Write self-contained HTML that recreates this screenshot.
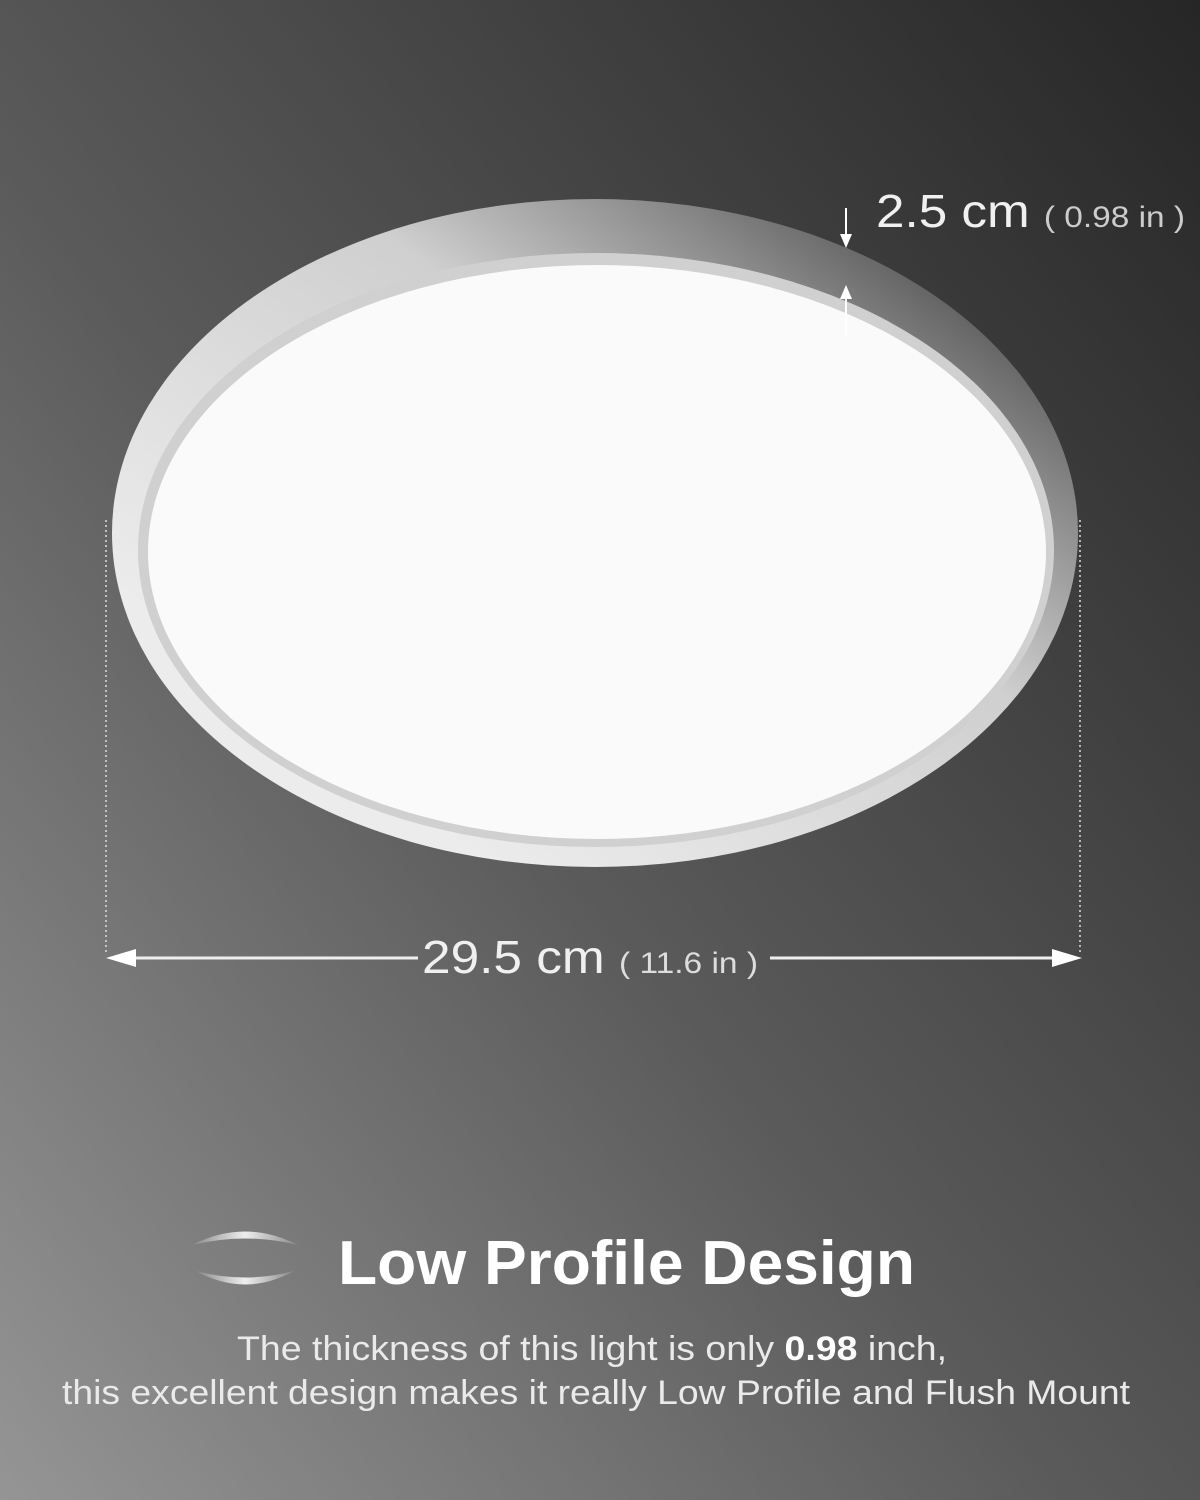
<!DOCTYPE html>
<html><head><meta charset="utf-8"><style>
html,body{margin:0;padding:0;width:1200px;height:1500px;overflow:hidden;background:#444}
svg{display:block}
text{font-family:"Liberation Sans",sans-serif}
</style></head><body>
<svg width="1200" height="1500" viewBox="0 0 1200 1500" xmlns="http://www.w3.org/2000/svg">
<defs>
<linearGradient id="bg" x1="0" y1="1" x2="1" y2="0">
<stop offset="0" stop-color="#959595"/>
<stop offset="0.45" stop-color="#5a5a5a"/>
<stop offset="1" stop-color="#262626"/>
</linearGradient>
<linearGradient id="rim" x1="0.15" y1="0.75" x2="0.85" y2="0.1">
<stop offset="0" stop-color="#ececec"/>
<stop offset="0.6" stop-color="#cfcfcf"/>
<stop offset="0.85" stop-color="#8a8a8a"/>
<stop offset="1" stop-color="#5c5c5c"/>
</linearGradient>
<linearGradient id="ic" x1="0" x2="1">
<stop offset="0" stop-color="#888"/><stop offset="0.5" stop-color="#eee"/><stop offset="1" stop-color="#888"/>
</linearGradient>
</defs>
<rect width="1200" height="1500" fill="url(#bg)"/>
<ellipse cx="595" cy="533" rx="483" ry="334" fill="url(#rim)"/>
<ellipse cx="596" cy="550" rx="458" ry="297" fill="#d0d0d0"/>
<ellipse cx="597" cy="552" rx="449" ry="287" fill="#fafafa"/>
<line x1="106" y1="520" x2="106" y2="955" stroke="#ddd" stroke-width="1.5" stroke-dasharray="2 3"/>
<line x1="1080" y1="520" x2="1080" y2="955" stroke="#ddd" stroke-width="1.5" stroke-dasharray="2 3"/>
<line x1="125" y1="958" x2="418" y2="958" stroke="#eee" stroke-width="3"/>
<line x1="770" y1="958" x2="1062" y2="958" stroke="#eee" stroke-width="3"/>
<polygon points="106,958 136,949 136,967" fill="#fff"/>
<polygon points="1082,958 1052,949 1052,967" fill="#fff"/>
<text x="422" y="973" font-size="46" fill="#f0f0f0" textLength="336" lengthAdjust="spacingAndGlyphs">29.5 cm <tspan font-size="30" fill="#ddd">( 11.6 in )</tspan></text>
<line x1="846" y1="208" x2="846" y2="238" stroke="#fff" stroke-width="2"/>
<polygon points="846,248 840,234 852,234" fill="#fff"/>
<line x1="846" y1="298" x2="846" y2="336" stroke="#fff" stroke-width="2"/>
<polygon points="846,285 840,299 852,299" fill="#fff"/>
<text x="876" y="227" font-size="46" fill="#f0f0f0" textLength="309" lengthAdjust="spacingAndGlyphs">2.5 cm <tspan font-size="30" fill="#ccc">( 0.98 in )</tspan></text>
<path d="M192 1245 Q245 1218 298 1245 Q245 1232 192 1245Z" fill="url(#ic)"/>
<path d="M196 1271 Q245 1298 294 1271 Q245 1284 196 1271Z" fill="url(#ic)"/>
<text x="338" y="1284" font-size="62" font-weight="bold" fill="#fff" textLength="577" lengthAdjust="spacingAndGlyphs">Low Profile Design</text>
<text x="237" y="1360" font-size="34" fill="#eaeaea" textLength="710" lengthAdjust="spacingAndGlyphs">The thickness of this light is only <tspan font-weight="bold" fill="#fff">0.98</tspan> inch,</text>
<text x="62" y="1404" font-size="34" fill="#eaeaea" textLength="1068" lengthAdjust="spacingAndGlyphs">this excellent design makes it really Low Profile and Flush Mount</text>
</svg>
</body></html>
